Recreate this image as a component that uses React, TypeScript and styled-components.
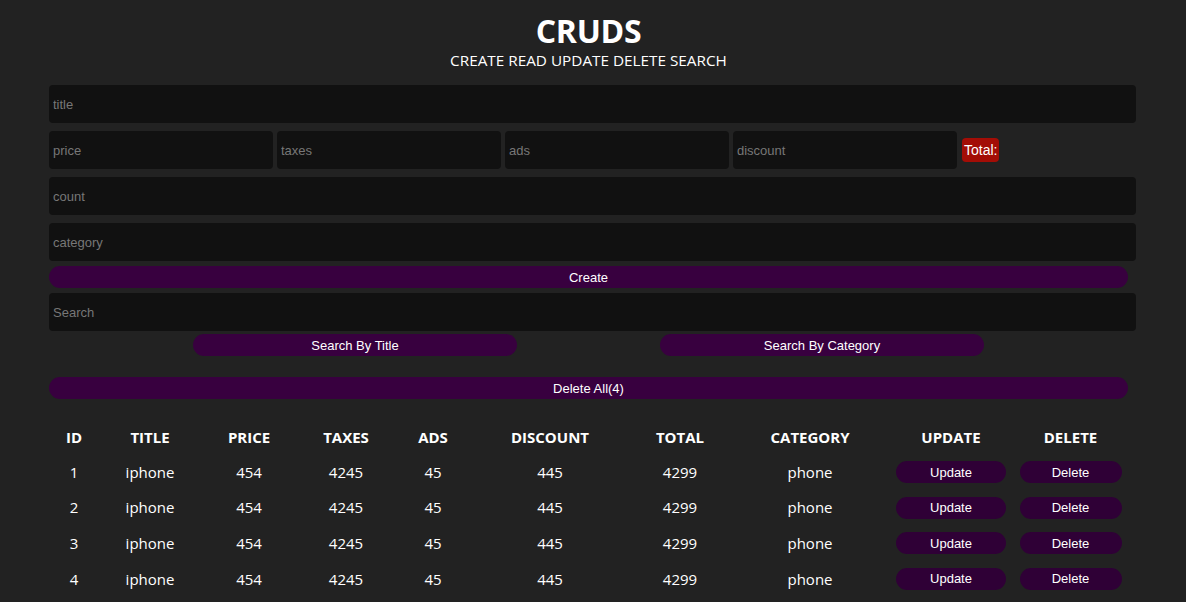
import React from "react";
import styled, { createGlobalStyle } from "styled-components";

const GlobalStyle = createGlobalStyle`
  * { box-sizing: border-box; }
  body {
    margin: 0;
    background: #222222;
    color: #ffffff;
    font-family: "Open Sans", "Noto Sans", sans-serif;
  }
`;

interface Product {
  id: number;
  title: string;
  price: number;
  taxes: number;
  ads: number;
  discount: number;
  total: number;
  category: string;
}

const products: Product[] = [1, 2, 3, 4].map((id) => ({
  id,
  title: "iphone",
  price: 454,
  taxes: 4245,
  ads: 45,
  discount: 445,
  total: 4299,
  category: "phone",
}));

const columns = ["ID", "TITLE", "PRICE", "TAXES", "ADS", "DISCOUNT", "TOTAL", "CATEGORY", "UPDATE", "DELETE"];
const colWidths = [50, 102, 96, 98, 76, 158, 102, 158, 124, 115];

export default function App() {
  return (
    <>
      <GlobalStyle />
      <Page>
        <Head>
          <h1>CRUDS</h1>
          <p>CREATE READ UPDATE DELETE SEARCH</p>
        </Head>
        <Inputs>
          <Field placeholder="title" />
          <PriceRow>
            <Field placeholder="price" />
            <Field placeholder="taxes" />
            <Field placeholder="ads" />
            <Field placeholder="discount" />
            <Total>Total:</Total>
          </PriceRow>
          <Field placeholder="count" />
          <Field placeholder="category" />
        </Inputs>
        <WideButton>Create</WideButton>
        <SearchBox>
          <Field placeholder="Search" />
          <SearchButtons>
            <SearchButton>Search By Title</SearchButton>
            <SearchButton>Search By Category</SearchButton>
          </SearchButtons>
        </SearchBox>
        <DeleteAll>
          <WideButton>Delete All(4)</WideButton>
        </DeleteAll>
        <Table>
          <colgroup>
            {colWidths.map((w, i) => (
              <col key={i} style={{ width: w }} />
            ))}
          </colgroup>
          <thead>
            <tr>
              {columns.map((c) => (
                <th key={c}>{c}</th>
              ))}
            </tr>
          </thead>
          <tbody>
            {products.map((p) => (
              <tr key={p.id}>
                <td>{p.id}</td>
                <td>{p.title}</td>
                <td>{p.price}</td>
                <td>{p.taxes}</td>
                <td>{p.ads}</td>
                <td>{p.discount}</td>
                <td>{p.total}</td>
                <td>{p.category}</td>
                <td>
                  <RowButton $width={110}>Update</RowButton>
                </td>
                <td>
                  <RowButton $width={102}>Delete</RowButton>
                </td>
              </tr>
            ))}
          </tbody>
        </Table>
      </Page>
    </>
  );
}

const Page = styled.div`
  width: 1079px;
  margin-left: 49px;
  padding-top: 12px;
`;

const Head = styled.div`
  text-align: center;
  h1 {
    margin: 0;
    font-size: 32px;
    line-height: 38px;
    font-weight: 700;
    letter-spacing: -0.3px;
  }
  p {
    margin: 0;
    font-size: 15.3px;
    line-height: 20px;
  }
`;

const Inputs = styled.div`
  margin-top: 15px;
  display: flex;
  flex-direction: column;
  gap: 8px;
`;

const Field = styled.input`
  display: block;
  width: calc(100% + 8px);
  height: 38px;
  border: none;
  outline: none;
  border-radius: 4px;
  background: #111111;
  color: #ffffff;
  padding: 0 4px;
  font-family: "Liberation Sans", Arial, sans-serif;
  font-size: 13px;
  &::placeholder {
    color: #777777;
  }
`;

const PriceRow = styled.div`
  display: flex;
  align-items: center;
  gap: 4px;
  ${Field} {
    flex: none;
    width: 224px;
  }
`;

const Total = styled.span`
  background: #a30d06;
  color: #ffffff;
  border-radius: 4px;
  padding: 4px 2px;
  margin-left: 1px;
  font-family: "Liberation Sans", Arial, sans-serif;
  font-size: 14px;
  font-weight: 400;
  line-height: 16px;
`;

const Button = styled.button`
  border: none;
  color: #ffffff;
  background: #38003f;
  height: 22px;
  border-radius: 11px;
  cursor: pointer;
  font-family: "Liberation Sans", Arial, sans-serif;
  font-size: 13px;
  padding: 0;
`;

const WideButton = styled(Button)`
  display: block;
  width: 100%;
  margin-top: 5px;
`;

const SearchBox = styled.div`
  margin-top: 5px;
`;

const SearchButtons = styled.div`
  display: flex;
  justify-content: center;
  gap: 143px;
  margin-top: 3px;
`;

const SearchButton = styled(Button)`
  width: 324px;
`;

const DeleteAll = styled.div`
  margin-top: 21px;
`;

const Table = styled.table`
  width: 100%;
  margin-top: 21px;
  border-collapse: collapse;
  table-layout: fixed;
  text-align: center;
  th {
    font-size: 15px;
    font-weight: 700;
    height: 34px;
    padding: 0;
  }
  td {
    font-size: 15px;
    height: 35.6px;
    padding: 0;
  }
`;

const RowButton = styled(Button)<{ $width: number }>`
  width: ${(p) => p.$width}px;
  background: #2f0036;
`;
